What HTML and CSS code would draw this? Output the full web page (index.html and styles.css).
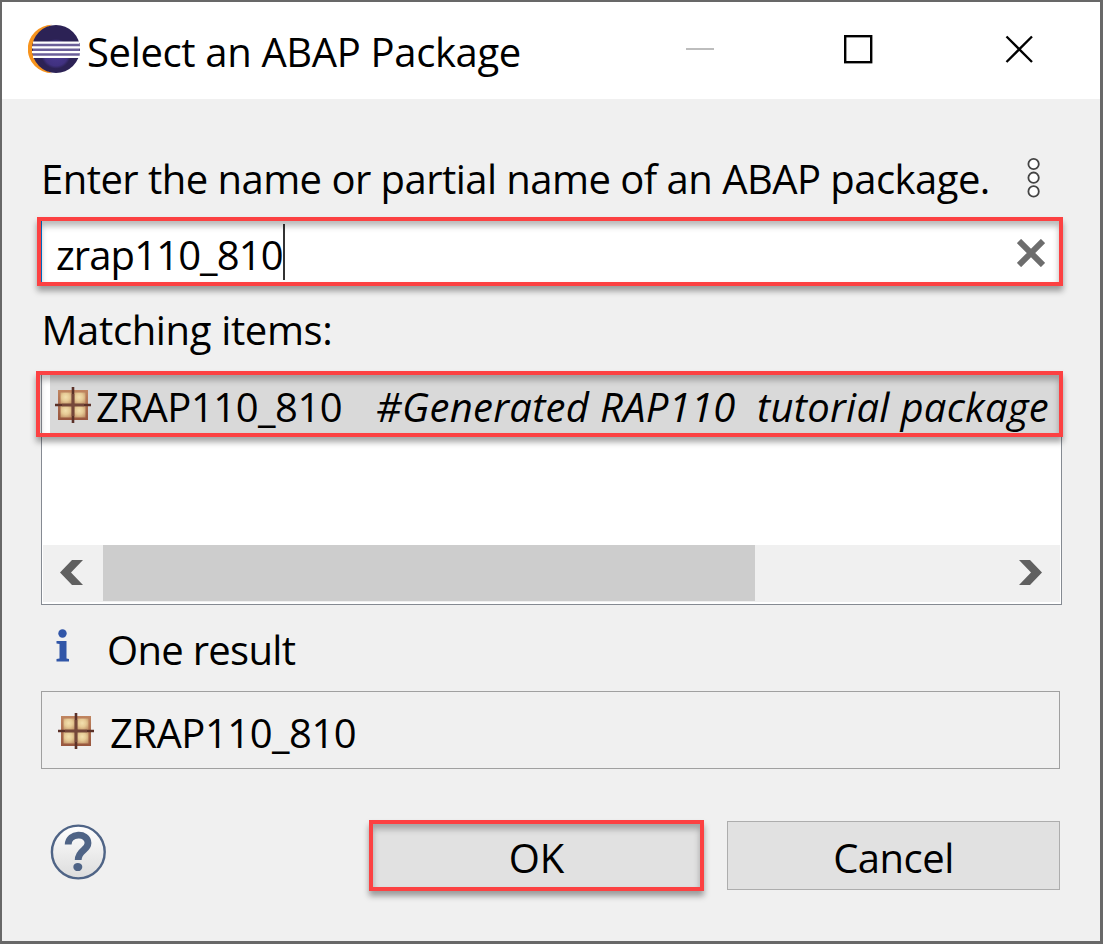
FILE: index.html
```
<!DOCTYPE html>
<html lang="en">
<head>
<meta charset="utf-8">
<title>Select an ABAP Package</title>
<link rel="stylesheet" href="styles.css">
</head>
<body>
<svg width="0" height="0" class="defs" aria-hidden="true">
  <defs>
    <radialGradient id="tile" cx=".45" cy=".4" r=".75"><stop offset="0" stop-color="#f3e0ae"/><stop offset=".45" stop-color="#e6ca95"/><stop offset="1" stop-color="#bd8c62"/></radialGradient>
    <linearGradient id="frame" x1="0" y1="0" x2="0" y2="1"><stop offset="0" stop-color="#c08560"/><stop offset="1" stop-color="#98563e"/></linearGradient>
    <symbol id="package" viewBox="0 0 36 36">
      <rect x="3" y="3" width="30" height="30" fill="url(#frame)"/>
      <rect x="5.500" y="5.500" width="11.500" height="11.500" fill="url(#tile)"/>
      <rect x="19" y="5.500" width="11.500" height="11.500" fill="url(#tile)"/>
      <rect x="5.500" y="19" width="11.500" height="11.500" fill="url(#tile)"/>
      <rect x="19" y="19" width="11.500" height="11.500" fill="url(#tile)"/>
      <path d="M18 0V36M0 18H36" stroke="#5b3128" stroke-width="2.600"/>
      <path d="M18 7V29M7 18H29" stroke="#75473a" stroke-width="2.600"/>
    </symbol>
  </defs>
</svg>
<div class="window">
  <header class="titlebar">
    <svg class="logo" viewBox="0 0 52 50">
      <defs><radialGradient id="orb" cx=".5" cy=".6" r=".5"><stop offset="0" stop-color="#4b3a91"/><stop offset=".5" stop-color="#403180"/><stop offset=".62" stop-color="#2c2255"/><stop offset="1" stop-color="#2c2255"/></radialGradient></defs>
      <path d="M24 .800A24.200 24.200 0 0 0 24 49.200C2 40 2 10 24 .800Z" fill="#f7941e"/>
      <circle cx="28" cy="25" r="24" fill="url(#orb)"/>
      <path d="M5 19H51.500V32H5Z" fill="#6b5f99"/>
      <path d="M5 18.600H51M4 23.400H52M4 28.200H52M5 32.800H51" stroke="#fff" stroke-width="2.300"/>
    </svg>
    <h1 class="text t-title">Select an ABAP Package</h1>
    <svg class="controls" viewBox="0 0 348 30">
      <path d="M0 15H28" stroke="#bdbdbd" stroke-width="2"/>
      <rect x="159.200" y="2.200" width="26" height="26" fill="none" stroke="#000" stroke-width="2.400"/>
      <path d="M320.500 2.500L346 28M346 2.500L320.500 28" stroke="#000" stroke-width="2.300"/>
    </svg>
  </header>
  <main class="content">
    <div class="prompt">
      <label class="text t-prompt">Enter the name or partial name of an ABAP package.</label>
      <svg class="menu" viewBox="0 0 14 42"><g fill="#fff" stroke="#444" stroke-width="1.800"><circle cx="6.600" cy="7" r="5.200"/><circle cx="6.600" cy="20.700" r="5.200"/><circle cx="6.600" cy="34.400" r="5.200"/></g></svg>
    </div>
    <div class="search">
      <span class="text t-query">zrap110_810</span><span class="caret"></span>
      <svg class="clear" viewBox="0 0 28 28"><path d="M2 2L26 26M26 2L2 26" stroke="#6d6d6d" stroke-width="6"/></svg>
      <div class="mark mark-search"></div>
    </div>
    <div class="text t-matching">Matching items:</div>
    <div class="list">
      <div class="item">
        <svg class="package"><use href="#package"/></svg>
        <span class="text t-item">ZRAP110_810</span>
        <em class="text t-desc">#Generated RAP110&nbsp; tutorial package</em>
      </div>
      <div class="scrollbar">
        <svg class="arrow" viewBox="0 0 24 26"><path d="M12 0H23L11 12.500L23 25H12L0 12.500Z" fill="#606060"/></svg>
        <div class="thumb"></div>
        <svg class="arrow next" viewBox="0 0 24 26"><path d="M0 0H11L23 12.500L11 25H0L12 12.500Z" fill="#606060"/></svg>
      </div>
      <div class="mark mark-item"></div>
    </div>
    <div class="result">
      <svg class="info" viewBox="0 0 14 34"><g fill="#3156a8"><circle cx="6.500" cy="4.500" r="4.200"/><path d="M.500 12H10.500V29.500L13 30V32.500H.500V30L3.500 29.500V15L.500 14.500Z"/></g></svg>
      <span class="text t-result">One result</span>
    </div>
    <div class="status">
      <svg class="package"><use href="#package"/></svg>
      <span class="text t-status">ZRAP110_810</span>
    </div>
    <footer class="actions">
      <svg class="help" viewBox="0 0 56 56">
        <defs><linearGradient id="glass" x1="0" y1="0" x2="0" y2="1"><stop offset="0" stop-color="#fff"/><stop offset="1" stop-color="#dcdcdc"/></linearGradient></defs>
        <circle cx="28.300" cy="28" r="26.400" fill="url(#glass)" stroke="#4f6486" stroke-width="2.400"/>
        <path d="M18.200 20.500C18.500 8.500 38 8 38 19C38 26.500 28.200 26 28.200 36" fill="none" stroke="#4f6486" stroke-width="6.800"/>
        <ellipse cx="27.800" cy="43" rx="4.500" ry="4.100" fill="#4f6486"/>
      </svg>
      <button class="button ok"><span class="text t-ok">OK</span><span class="mark mark-ok"></span></button>
      <button class="button"><span class="text t-cancel">Cancel</span></button>
    </footer>
  </main>
</div>
</body>
</html>
```
FILE: styles.css
```
* { box-sizing: border-box; }
body { margin: 0; background: #f0f0f0; }
svg { display: block; flex: none; }
.defs { position: absolute; }
.window {
  width: 1103px; height: 944px; overflow: hidden;
  border: solid #686868; border-width: 2px 3px 3px 2px;
  background: #f0f0f0;
}
.text {
  margin: 0; font: 400 40px/41px "Open Sans", "Noto Sans", sans-serif;
  color: #000; white-space: nowrap;
}
.titlebar { height: 97px; display: flex; align-items: flex-start; padding: 22px 0 0 26px; background: #fff; }
.logo { width: 52px; height: 50px; }
.t-title { margin: 7px 0 0 7px; width: 599px; letter-spacing: -0.35px; }
.controls { width: 348px; height: 30px; margin-top: 10px; }
.content { padding: 59px 38px 0 39px; }
.prompt { height: 41px; display: flex; justify-content: space-between; padding-right: 21px; }
.t-prompt { letter-spacing: -0.54px; }
.menu { width: 14px; height: 42px; margin-top: -1px; }
.search {
  position: relative; width: 1019px; height: 65px; margin-top: 20px; padding: 4px 15px 0 14px;
  display: flex; align-items: center; background: #fff; border-left: 1px solid #0078d7;
}
.t-query { width: 227px; margin-top: 1px; letter-spacing: -0.9px; }
.caret { width: 2px; height: 56px; margin-top: -4px; background: #333; }
.clear { width: 28px; height: 28px; margin: -1px 0 0 auto; }
.mark {
  position: absolute; border: 4px solid #fc4142; pointer-events: none;
  box-shadow: 0 5px 6px rgba(0,0,0,.36), inset 0 5px 6px rgba(0,0,0,.28);
}
.mark-search { left: -5px; top: -2px; width: 1026px; height: 69px; }
.mark-item { left: -6px; top: -3px; width: 1027px; height: 66px; }
.mark-ok { left: -2px; top: -2px; width: 335px; height: 71px; }
.t-matching { margin-top: 25px; padding-left: .5px; letter-spacing: -0.36px; }
.list {
  position: relative; width: 1021px; height: 232px; margin-top: 23px; padding: 1px 1px 2px;
  border: 1px solid #858a92; background: #fff; display: flex; flex-direction: column; justify-content: space-between;
}
.item { height: 61px; margin-left: 7px; padding-left: 5px; display: flex; align-items: center; background: #d9d9d9; }
.package { width: 36px; height: 36px; }
.item .package { margin-top: -1px; }
.t-item { margin: 2px 0 0 5px; width: 280px; letter-spacing: -0.5px; }
.t-desc { margin-top: 2px; font-style: italic; letter-spacing: 0.28px; }
.scrollbar { height: 57px; display: flex; align-items: center; background: #f0f0f0; padding: 0 17px 1px; }
.arrow { width: 24px; height: 26px; }
.thumb { width: 652px; height: 56px; margin-left: 19px; background: #cdcdcd; }
.next { margin-left: auto; }
.result { height: 41px; margin-top: 24px; padding-left: 15px; display: flex; }
.info { width: 14px; height: 34px; margin-right: 37px; }
.t-result { letter-spacing: -0.7px; }
.status {
  width: 1019px; height: 78px; margin-top: 21px; padding: 2px 0 0 16px;
  display: flex; align-items: center; border: 1px solid #a0a0a0;
}
.t-status { margin: 2px 0 0 16px; letter-spacing: -0.5px; }
.actions { width: 1019px; height: 69px; margin-top: 52px; display: flex; }
.help { width: 56px; height: 56px; margin: 3px auto 0 9px; }
.button {
  position: relative; width: 333px; height: 69px; padding: 4px 0 0; margin: 0;
  background: #e1e1e1; border: 1px solid #adadad; border-radius: 0;
}
.ok { margin-right: 24px; }
.t-cancel { letter-spacing: -0.5px; }
```
